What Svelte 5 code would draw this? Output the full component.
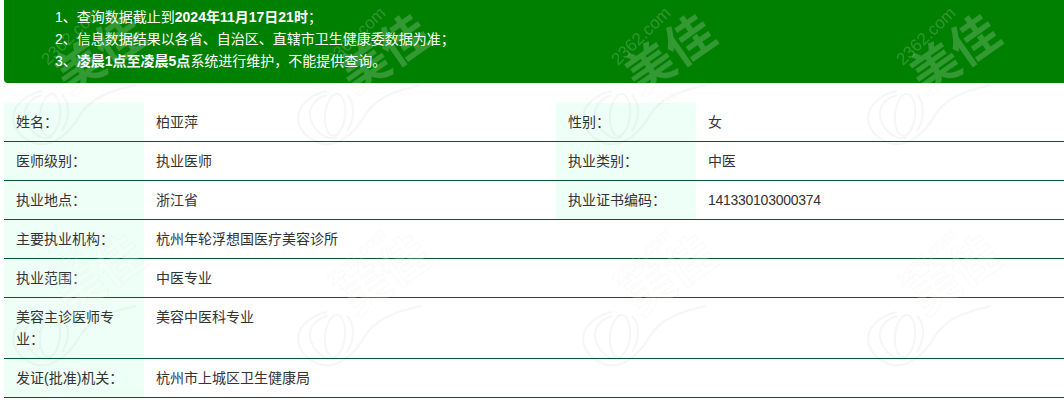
<script>
	let rows = [
		{ label: '姓名：', value: '柏亚萍', label2: '性别：', value2: '女' },
		{ label: '医师级别：', value: '执业医师', label2: '执业类别：', value2: '中医' },
		{ label: '执业地点：', value: '浙江省', label2: '执业证书编码：', value2: '141330103000374' },
		{ label: '主要执业机构：', value: '杭州年轮浮想国医疗美容诊所' },
		{ label: '执业范围：', value: '中医专业' },
		{ label: '美容主诊医师专业：', value: '美容中医科专业' },
		{ label: '发证(批准)机关：', value: '杭州市上城区卫生健康局' }
	];
</script>

<div class="page">
	<ul class="notice">
		<li>1、查询数据截止到<b>2024年11月17日21时</b>；</li>
		<li>2、信息数据结果以各省、自治区、直辖市卫生健康委数据为准；</li>
		<li>3、<b>凌晨1点至凌晨5点</b>系统进行维护，不能提供查询。</li>
	</ul>

	<table>
		<colgroup>
			<col class="label-col" />
			<col class="value-col" />
			<col class="label-col" />
			<col />
		</colgroup>
		<tbody>
			{#each rows as row}
				<tr>
					<th>{row.label}</th>
					{#if row.label2}
						<td>{row.value}</td>
						<th>{row.label2}</th>
						<td class="num">{row.value2}</td>
					{:else}
						<td colspan="3">{row.value}</td>
					{/if}
				</tr>
			{/each}
		</tbody>
	</table>

	<svg class="watermark" width="1064" height="408" aria-hidden="true">
		<defs>
			<pattern id="wm" x="8" y="7" width="285" height="221" patternUnits="userSpaceOnUse">
				<g class="flower">
					<ellipse cx="42" cy="108" rx="10" ry="21" transform="rotate(6 42 108)" />
					<path d="M34 88C20 92 12 104 20 118C26 128 36 134 44 130" />
					<path d="M8 100C0 116 10 130 26 136C44 142 62 126 72 108C82 92 100 84 128 78" />
					<path d="M8 100C14 92 22 86 34 84" />
					<path d="M54 88C62 96 62 112 54 124" />
				</g>
				<text class="site" transform="translate(40 59) rotate(-44)">2362.com</text>
				<text class="brand" transform="translate(92 47) rotate(-35)" text-anchor="middle" y="17">美佳</text>
			</pattern>
		</defs>
		<rect width="1064" height="408" fill="url(#wm)" />
	</svg>
</div>

<style>
	:global(body) {
		margin: 0;
		background: #fff;
	}
	.page {
		position: relative;
		width: 1064px;
		height: 408px;
		overflow: hidden;
		font-family: 'Liberation Sans', 'Noto Sans CJK SC', sans-serif;
		font-size: 14px;
		line-height: 22px;
		color: #333;
	}
	.notice {
		list-style: none;
		margin: 0 0 20px 4px;
		padding: 6px 0 11px 51px;
		background-color: green;
		border-bottom-left-radius: 4px;
		color: #fff;
	}
	table {
		width: 1060px;
		margin-left: 4px;
		table-layout: fixed;
		border-collapse: separate;
		border-spacing: 0;
	}
	.label-col {
		width: 140px;
	}
	.value-col {
		width: 412px;
	}
	th,
	td {
		padding: 8px 12px;
		border-bottom: 1px solid #005c30;
		text-align: left;
		vertical-align: top;
		font-weight: normal;
	}
	th {
		background-color: #eefff8;
	}
	.num {
		letter-spacing: -0.27px;
	}
	.watermark {
		position: absolute;
		top: 0;
		left: 0;
		pointer-events: none;
	}
	.flower {
		fill: none;
		stroke: #000;
		stroke-opacity: 0.035;
		stroke-width: 2;
	}
	.site {
		font-size: 17px;
		fill: #fff;
		fill-opacity: 0.18;
		stroke: #000;
		stroke-opacity: 0.012;
	}
	.brand {
		font-size: 48px;
		font-weight: bold;
		fill: #fff;
		fill-opacity: 0.2;
		stroke: #000;
		stroke-opacity: 0.02;
	}
</style>
